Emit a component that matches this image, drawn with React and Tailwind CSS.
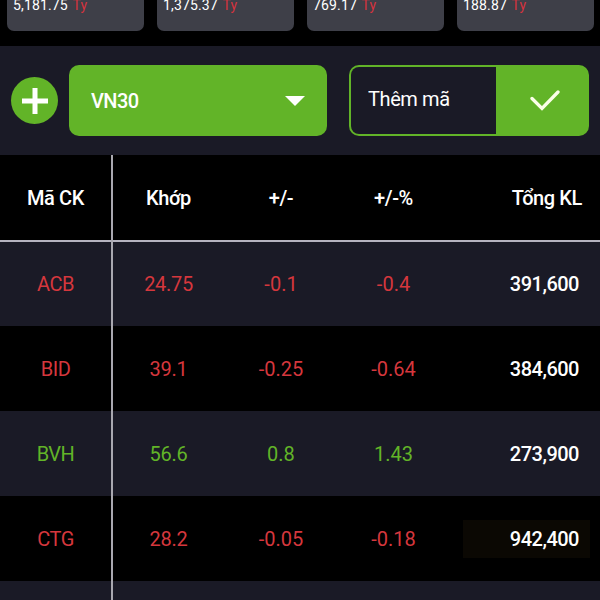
import React, { useState } from "react";

const totals = [
  { value: "5,181.75" },
  { value: "1,375.37" },
  { value: "769.17" },
  { value: "188.87" },
];

const stocks = [
  { code: "ACB", price: "24.75", change: "-0.1", percent: "-0.4", volume: "391,600" },
  { code: "BID", price: "39.1", change: "-0.25", percent: "-0.64", volume: "384,600" },
  { code: "BVH", price: "56.6", change: "0.8", percent: "1.43", volume: "273,900", up: true },
  { code: "CTG", price: "28.2", change: "-0.05", percent: "-0.18", volume: "942,400", flash: true },
];

const columns = "grid grid-cols-[111px_115px_110px_115px_1fr] items-center text-center";

const App = () => {
  const [symbol, setSymbol] = useState("");

  return (
    <div className="relative w-[600px] h-[600px] overflow-hidden bg-black font-['Roboto','Noto_Sans',sans-serif] text-white">
      {/* Market totals */}
      <div className="h-[46px] flex gap-[13px] pl-[7px] pr-1.5">
        {totals.map((t) => (
          <div
            key={t.value}
            className="w-[137px] h-[31px] shrink-0 rounded-b-[7px] bg-[#3e3f48] pl-1.5 text-[14px] leading-[11px] tracking-[0.15px] whitespace-nowrap"
          >
            {t.value} <span className="ml-px text-[#d5333e]">Tỷ</span>
          </div>
        ))}
      </div>

      {/* Toolbar */}
      <div className="h-[109px] flex items-center bg-[#1a1a26] pl-[11px] pr-[11px]">
        <button className="w-[47px] h-[47px] rounded-full bg-[#62b428] flex items-center justify-center">
          <svg width="26" height="26" viewBox="0 0 26 26" stroke="white" strokeWidth="5">
            <path d="M13 0v26M0 13h26" />
          </svg>
        </button>
        <button className="ml-[11px] w-[258px] h-[71px] rounded-[10px] bg-[#62b428] flex items-center justify-between pl-[22px] pr-[22px] text-[20px] font-medium tracking-[-0.6px]">
          <span>VN30</span>
          <svg width="20" height="10" viewBox="0 0 20 10" fill="white">
            <path d="M0 0h20L10 10z" />
          </svg>
        </button>
        <div className="ml-[22px] w-[240px] h-[71px] rounded-[10px] bg-[#62b428] p-0.5 flex">
          <input
            value={symbol}
            onChange={(e) => setSymbol(e.target.value)}
            placeholder="Thêm mã"
            className="w-[145px] rounded-l-lg bg-[#1a1a26] pl-[17px] pb-1 text-[20px] tracking-[-0.4px] placeholder:text-white outline-none"
          />
          <button className="flex-1 flex items-center justify-center pl-1.5">
            <svg width="30" height="21" viewBox="0 0 30 21" fill="none" stroke="#fbffe8" strokeWidth="3.3">
              <path d="M2 8.5L12 18.5L28 2" strokeLinecap="round" />
            </svg>
          </button>
        </div>
      </div>

      {/* Price table */}
      <div className="relative text-[20px]">
        <div className={`${columns} h-[87px] border-b-2 border-[#b5b3bf] font-medium tracking-[-0.4px]`}>
          <span>Mã CK</span>
          <span>Khớp</span>
          <span>+/-</span>
          <span>+/-%</span>
          <span className="pr-[18px] text-right">Tổng KL</span>
        </div>
        {stocks.map((s) => (
          <div
            key={s.code}
            className={`${columns} h-[85px] nth-2:h-[84px] odd:bg-black even:bg-[#1a1a26] ${
              s.up ? "text-[#62b428]" : "text-[#d5373d]"
            }`}
          >
            <span className="tracking-[-0.5px]">{s.code}</span>
            <span className="tracking-[-0.3px]">{s.price}</span>
            <span>{s.change}</span>
            <span>{s.percent}</span>
            <span
              className={`ml-3 mr-2.5 h-[38px] pr-[11px] flex items-center justify-end font-medium tracking-[-0.5px] text-white ${
                s.flash ? "bg-[#0b0803]" : ""
              }`}
            >
              {s.volume}
            </span>
          </div>
        ))}
        <div className="h-5 bg-[#1a1a26]" />
        {/* Frozen column divider */}
        <div className="absolute left-[111px] top-0 bottom-0 w-0.5 bg-[#a9a8b0]" />
      </div>
    </div>
  );
};

export default App;
